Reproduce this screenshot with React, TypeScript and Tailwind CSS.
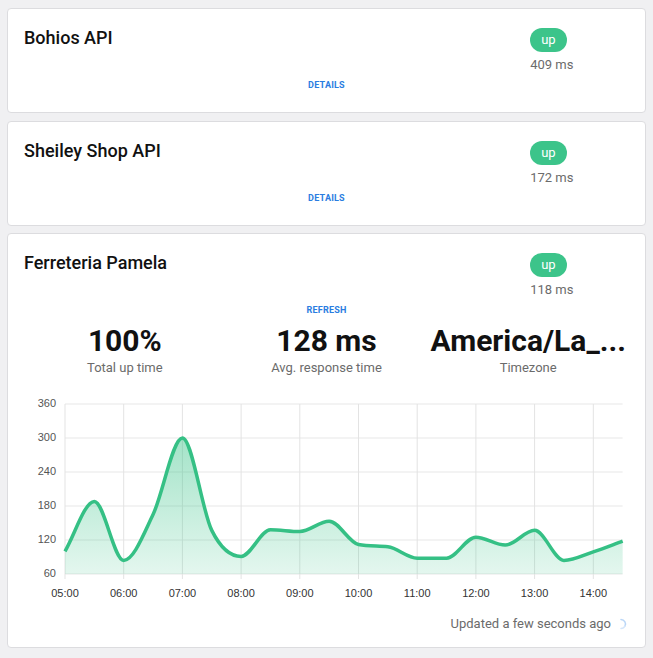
import React from "react";

type Pt = { x: number; y: number };

const values = [
  100, 188, 84, 165, 300, 137, 91, 138, 135, 153, 112, 108, 88, 88, 125, 111,
  137, 84, 99, 118,
];

// plot box inside the svg (svg spans card content width)
const L = 41;
const TOP = 12;
const BOT = 182;
const STEP = 29.35; // px per 30 min

const toY = (v: number) => BOT - ((v - 60) / 300) * (BOT - TOP);

// monotone cubic, same idea as chart.js cubicInterpolationMode: "monotone"
function monotonePath(pts: Pt[]) {
  const n = pts.length;
  const delta: number[] = [];
  for (let i = 0; i < n - 1; i++) {
    delta.push((pts[i + 1].y - pts[i].y) / (pts[i + 1].x - pts[i].x));
  }
  const m: number[] = pts.map((_, i) => {
    if (i === 0) return delta[0];
    if (i === n - 1) return delta[n - 2];
    if (Math.sign(delta[i - 1]) !== Math.sign(delta[i]) || delta[i - 1] === 0 || delta[i] === 0) return 0;
    return (delta[i - 1] + delta[i]) / 2;
  });
  for (let i = 0; i < n - 1; i++) {
    if (delta[i] === 0) {
      m[i] = 0;
      m[i + 1] = 0;
      continue;
    }
    const a = m[i] / delta[i];
    const b = m[i + 1] / delta[i];
    const sq = a * a + b * b;
    if (sq > 9) {
      const tau = 3 / Math.sqrt(sq);
      m[i] = a * tau * delta[i];
      m[i + 1] = b * tau * delta[i];
    }
  }
  let d = `M${pts[0].x},${pts[0].y}`;
  for (let i = 0; i < n - 1; i++) {
    const dx = (pts[i + 1].x - pts[i].x) / 3;
    d += ` C${pts[i].x + dx},${pts[i].y + m[i] * dx} ${pts[i + 1].x - dx},${pts[i + 1].y - m[i + 1] * dx} ${pts[i + 1].x},${pts[i + 1].y}`;
  }
  return d;
}

function ResponseChart() {
  const pts = values.map((v, i) => ({ x: L + i * STEP, y: toY(v) }));
  const line = monotonePath(pts);
  const right = pts[pts.length - 1].x;
  const area = `${line} L${right},${BOT} L${L},${BOT} Z`;
  const yTicks = [360, 300, 240, 180, 120, 60];
  const hours = ["05:00", "06:00", "07:00", "08:00", "09:00", "10:00", "11:00", "12:00", "13:00", "14:00"];

  return (
    <svg width="608" height="210" viewBox="0 0 608 210" className="block">
      <defs>
        <linearGradient id="fillGrad" x1="0" y1={TOP} x2="0" y2={BOT} gradientUnits="userSpaceOnUse">
          <stop offset="0%" stopColor="#3cc48a" stopOpacity="0.55" />
          <stop offset="100%" stopColor="#3cc48a" stopOpacity="0.14" />
        </linearGradient>
      </defs>
      {yTicks.map((v) => (
        <g key={v}>
          <line x1={L} x2={right} y1={toY(v)} y2={toY(v)} stroke="#e8e8e8" strokeWidth="1.2" />
          <text x={L - 9} y={toY(v) + 3} textAnchor="end" fontSize="11" fill="#555" fontFamily="'Liberation Sans', Arial, sans-serif">
            {v}
          </text>
        </g>
      ))}
      {hours.map((h, i) => {
        const x = L + i * STEP * 2;
        return (
          <g key={h}>
            <line x1={x} x2={x} y1={TOP} y2={BOT + 5} stroke="#e3e3e3" strokeWidth="1" />
            <text x={x} y={205} textAnchor="middle" fontSize="11" fill="#333" fontFamily="'Liberation Sans', Arial, sans-serif">
              {h}
            </text>
          </g>
        );
      })}
      <path d={area} fill="url(#fillGrad)" />
      <path d={line} fill="none" stroke="#35c085" strokeWidth="3.5" strokeLinejoin="round" />
    </svg>
  );
}

function Status({ ms }: { ms: string }) {
  return (
    <div className="col-span-2 flex flex-col items-start pt-[3px] pl-[2px]">
      <span className="inline-flex h-6 items-center rounded-full bg-[#3cc48a] px-[11px] text-[13px] text-white">
        up
      </span>
      <span className="mt-[3px] text-[13px] leading-5 text-[#6b6b6b]">{ms}</span>
    </div>
  );
}

function ServiceCard({ name, ms, link }: { name: string; ms: string; link: string }) {
  return (
    <div className="rounded border border-[#dcdcdf] bg-white px-4 pt-4 pb-[21px]">
      <div className="grid grid-cols-12">
        <h2 className="col-span-10 text-[18px] font-medium leading-[26px] text-[#111]">{name}</h2>
        <Status ms={ms} />
      </div>
      <div className="mt-1 text-center text-[9px] font-bold leading-3 tracking-wide text-[#2a7de1]">
        {link}
      </div>
    </div>
  );
}

export default function App() {
  return (
    <div
      className="min-h-screen bg-[#f0f0f2] px-[7px] pt-2 pb-2"
      style={{ fontFamily: "Roboto, 'Liberation Sans', sans-serif" }}
    >
      <div className="flex flex-col gap-2">
        <ServiceCard name="Bohios API" ms="409 ms" link="DETAILS" />
        <ServiceCard name="Sheiley Shop API" ms="172 ms" link="DETAILS" />
        <div className="-mt-px rounded border border-[#dcdcdf] bg-white px-4 pt-4 pb-[13px]">
          <div className="grid grid-cols-12">
            <h2 className="col-span-10 text-[18px] font-medium leading-[26px] text-[#111]">
              Ferreteria Pamela
            </h2>
            <Status ms="118 ms" />
          </div>
          <div className="mt-1 text-center text-[9px] font-bold leading-3 tracking-wide text-[#2a7de1]">
            REFRESH
          </div>
          <div className="mt-[7px] grid grid-cols-3 text-center">
            {[
              ["100%", "Total up time"],
              ["128 ms", "Avg. response time"],
              ["America/La_...", "Timezone"],
            ].map(([big, small]) => (
              <div key={small} className="min-w-0">
                <div className="truncate text-[30px] font-bold leading-9 text-[#111]">{big}</div>
                <div className="text-[13px] leading-[18px] text-[#6b6b6b]">{small}</div>
              </div>
            ))}
          </div>
          <div className="mt-[15px]">
            <ResponseChart />
          </div>
          <div className="mt-3 flex items-center justify-end gap-1 text-[13px] leading-5 text-[#6b6b6b]">
            <span>Updated a few seconds ago</span>
            <svg width="12" height="12" viewBox="0 0 12 12" className="mr-[2px]">
              <path d="M6 1.5 A4.5 4.5 0 0 1 10 8" fill="none" stroke="#b9d6f7" strokeWidth="1.5" strokeLinecap="round" />
              <path d="M10 8 A4.5 4.5 0 0 1 6 10.5" fill="none" stroke="#d5e6fa" strokeWidth="1.5" strokeLinecap="round" />
            </svg>
          </div>
        </div>
      </div>
    </div>
  );
}
